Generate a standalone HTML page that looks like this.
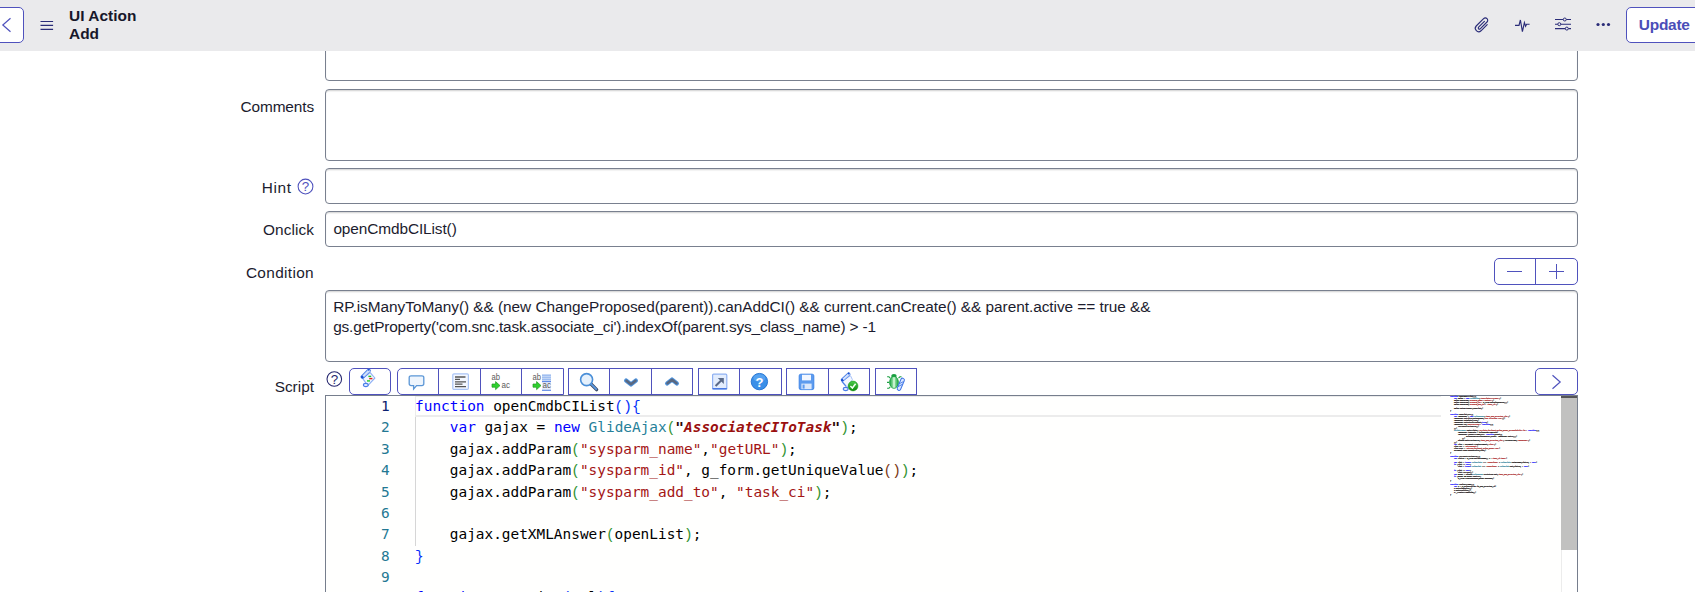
<!DOCTYPE html>
<html lang="en">
<head>
<meta charset="utf-8">
<title>UI Action - Add</title>
<style>
*{box-sizing:border-box;margin:0;padding:0}
html,body{width:1695px;height:592px;overflow:hidden;background:#fff}
body{font-family:"Liberation Sans",sans-serif;color:#1c1c2e;font-size:14.6px;position:relative}
.abs{position:absolute}
#hdr{position:absolute;left:0;top:0;width:1695px;height:51px;background:#eaeaec;z-index:5}
.hbtn{position:absolute;background:#fff;border:1px solid #4f52bd;border-radius:5px}
#back{left:-12px;top:7px;width:36px;height:36px}
#upd{left:1626px;top:7px;width:90px;height:36px;color:#4a4db8;font-weight:bold;font-size:15.45px;line-height:34px;padding-left:11.8px;letter-spacing:-0.25px}
#ttl{position:absolute;left:69px;top:6.8px;font-weight:bold;font-size:15.45px;line-height:18px;color:#17172a;letter-spacing:0.02px}
.lbl{position:absolute;left:120px;width:194px;text-align:right;font-size:15.4px;line-height:18px;color:#1c1c2e;letter-spacing:0.18px;white-space:nowrap}
.inp{position:absolute;left:325px;width:1253px;border:1px solid #79808f;border-radius:4px;background:#fff;box-shadow:inset 0 1px 1px rgba(0,0,0,.12),inset 0 2px 1px rgba(0,0,0,.04);font-size:15.4px;line-height:20px;padding:7px 7.4px;color:#1c1c2e;letter-spacing:-0.1px;white-space:nowrap;overflow:hidden}
.tb{position:absolute;top:368px;height:27px;border:1px solid #4f52bd;background:#fff}
.tb i{position:absolute;top:0;width:1px;height:25px;background:#4f52bd}
.tb svg{position:absolute;top:4px}
#ed{position:absolute;left:325px;top:395px;width:1253px;height:210px;border:1px solid #767e8d;background:#fffffe;font-family:"DejaVu Sans Mono","Liberation Mono",monospace;font-size:14.41px}
.ln{position:absolute;left:0;width:63.8px;text-align:right;color:#237893;height:21px;line-height:21px}
.cl{position:absolute;left:89.1px;height:21px;line-height:21px;white-space:pre;color:#000}
.cur{color:#0b216f}.k{color:#0000ff}.t{color:#267f99}.s{color:#a31515}.b1{color:#0431fa}.b2{color:#319331}.b3{color:#7b3814}.b1,.b2,.b3{font-family:"Liberation Mono",monospace;font-size:14.46px}
.si{color:#9a0f0f;font-weight:bold;font-style:italic}.sq{color:#2a0808;font-weight:bold;font-style:italic}
#mm{position:absolute;left:1124px;top:-1px;width:110px;height:104px;overflow:hidden}
#mm pre{font-family:"DejaVu Sans Mono","Liberation Mono",monospace;font-size:21px;letter-spacing:-2.64px;line-height:20px;transform:scale(0.1);transform-origin:0 0;white-space:pre;color:#000;font-weight:bold;-webkit-text-stroke:1.8px;opacity:.85}
</style>
</head>
<body>
<!-- form fields -->
<div class="inp" style="top:20px;height:61px"></div>
<div class="lbl" style="top:97.6px;letter-spacing:-.11px">Comments</div>
<div class="inp" style="top:89px;height:72px"></div>
<div class="lbl" style="top:178.6px;width:171.6px;letter-spacing:.6px">Hint</div>
<svg class="abs" style="left:296.7px;top:177.8px" width="17" height="17" viewBox="0 0 17 17"><circle cx="8.5" cy="8.5" r="7.4" fill="none" stroke="#4f52bd" stroke-width="1.05"/><text x="8.6" y="13.4" text-anchor="middle" font-family="Liberation Sans, sans-serif" font-size="13.4" fill="#4f52bd">?</text></svg>
<div class="inp" style="top:168px;height:36px"></div>
<div class="lbl" style="top:220.6px;letter-spacing:.07px">Onclick</div>
<div class="inp" style="top:211px;height:36px;padding-top:7px">openCmdbCIList()</div>
<div class="lbl" style="top:263.6px;letter-spacing:.34px">Condition</div>
<div class="hbtn" style="left:1494px;top:258px;width:84px;height:27px;border-radius:5px"></div>
<div class="abs" style="left:1535px;top:258px;width:1px;height:27px;background:#4f52bd"></div>
<div class="abs" style="left:1507px;top:271px;width:15px;height:1px;background:#4f52bd"></div>
<div class="abs" style="left:1549px;top:271px;width:15px;height:1px;background:#4f52bd"></div>
<div class="abs" style="left:1556px;top:264px;width:1px;height:15px;background:#4f52bd"></div>
<div class="inp" style="top:290px;height:72px;padding-top:6.2px;line-height:19.7px;padding-left:7.2px"><span style="letter-spacing:-.04px">RP.isManyToMany() &amp;&amp; (new ChangeProposed(parent)).canAddCI() &amp;&amp; current.canCreate() &amp;&amp; parent.active == true &amp;&amp;</span><br><span style="letter-spacing:-.163px">gs.getProperty('com.snc.task.associate_ci').indexOf(parent.sys_class_name) &gt; -1</span></div>
<div class="lbl" style="top:377.6px;letter-spacing:0px">Script</div>

<!--TBSTART-->
<!-- script toolbar -->
<svg class="abs" style="left:326px;top:370px" width="18" height="18" viewBox="0 0 18 18"><circle cx="8.3" cy="9" r="7.3" fill="none" stroke="#25266e" stroke-width="1.05"/><text x="8.4" y="13.7" text-anchor="middle" font-family="Liberation Sans, sans-serif" font-size="13.4" fill="#25266e">?</text></svg>
<div class="tb" style="left:349px;width:42px;border-radius:5px"></div>
<div class="tb" style="left:397px;width:167px;border-radius:5px 0 0 5px"><i style="left:40px"></i><i style="left:82px"></i><i style="left:123px"></i></div>
<div class="tb" style="left:568px;width:125px"><i style="left:40px"></i><i style="left:82px"></i></div>
<div class="tb" style="left:698px;width:84px"><i style="left:40px"></i></div>
<div class="tb" style="left:786px;width:84px"><i style="left:41px"></i></div>
<div class="tb" style="left:875px;width:42px"></div>
<div class="tb" style="left:1535px;width:43px;border-radius:5px"></div>
<svg class="abs" style="left:1550px;top:374px" width="12" height="16" viewBox="0 0 12 16"><path d="M2.5 1.2 L10.2 8 L2.5 14.8" fill="none" stroke="#4f52bd" stroke-width="1.2"/></svg>
<!-- toolbar icons -->
<svg class="abs" style="left:359px;top:368px" width="18" height="20" viewBox="0 0 18 20">
  <path d="M11.2 4.6 L15.9 10 L8.8 17.6 L3.6 10.4 Z" fill="#f3f7ff" stroke="#8fb0f5" stroke-width="1.1" stroke-linejoin="round"/>
  <path d="M9.8 2.6 L3.6 8.8" stroke="#4a7fe8" stroke-width="4" stroke-linecap="round"/>
  <path d="M10 2.6 L4.6 8" stroke="#cfe0fc" stroke-width="2.2" stroke-linecap="round"/>
  <circle cx="3.2" cy="9" r="1.3" fill="#1a4fd0"/><circle cx="9.8" cy="1.8" r="0.9" fill="#1a4fd0"/>
  <ellipse cx="6.8" cy="17" rx="2.4" ry="1.6" fill="#e6eeff" stroke="#4a7fe8" stroke-width="1.1"/>
  <rect x="9.4" y="7.7" width="2.8" height="1.4" fill="#22c022"/><rect x="10.2" y="9.9" width="3.2" height="1.4" fill="#e02a1a"/><rect x="8" y="12.1" width="3" height="1.6" fill="#3ed03e"/>
</svg>
<svg class="abs" style="left:408px;top:374px" width="18" height="17" viewBox="0 0 18 17">
  <path d="M3 1.8h11a1.8 1.8 0 0 1 1.8 1.8v6.2a1.8 1.8 0 0 1-1.8 1.8H8.6L5.6 15 5.6 11.6H3a1.8 1.8 0 0 1-1.8-1.8V3.6A1.8 1.8 0 0 1 3 1.8z" fill="#eef5fd" stroke="#5b96d6" stroke-width="1.3"/>
</svg>
<svg class="abs" style="left:452px;top:373px" width="18" height="18" viewBox="0 0 18 18">
  <rect x="0.8" y="0.8" width="15.6" height="15.6" rx="1.2" fill="#f3f7ff" stroke="#a9c4f5" stroke-width="1.2"/>
  <path d="M3 4h10.5M3 6.4h5M3 8.8h11M3 11.2h7.5M3 13.6h11" stroke="#555" stroke-width="1.3"/>
</svg>
<svg class="abs" style="left:490px;top:372px" width="22" height="20" viewBox="0 0 22 20">
  <text x="1.5" y="7.8" font-family="Liberation Sans, sans-serif" font-size="8.5" fill="#5a5a5a" textLength="8.5" lengthAdjust="spacingAndGlyphs">ab</text>
  <text x="11.5" y="16" font-family="Liberation Sans, sans-serif" font-size="8.5" fill="#5a5a5a" textLength="8.5" lengthAdjust="spacingAndGlyphs">ac</text>
  <path d="M2 12h3.6v-2.4l4.4 4-4.4 4v-2.4h-3.6z" fill="#2fd12f" stroke="#1c9c1c" stroke-width="0.7"/>
</svg>
<svg class="abs" style="left:531px;top:372px" width="22" height="20" viewBox="0 0 22 20">
  <rect x="11" y="2.4" width="9" height="6.2" fill="#9dbdf0"/><path d="M11 4.4h9M11 6.4h9" stroke="#d6e4fb" stroke-width="0.7"/>
  <text x="1.5" y="7.8" font-family="Liberation Sans, sans-serif" font-size="8.5" fill="#5a5a5a" textLength="8.5" lengthAdjust="spacingAndGlyphs">ab</text>
  <rect x="11" y="9.6" width="9" height="8.4" fill="#e4ecfb"/>
  <text x="11.5" y="16.4" font-family="Liberation Sans, sans-serif" font-size="8.5" fill="#5a5a5a" textLength="8.5" lengthAdjust="spacingAndGlyphs">ac</text>
  <path d="M11 9.6h9M11 18.3h9" stroke="#3b6fe0" stroke-width="0.9"/>
  <path d="M2 12h3.6v-2.4l4.4 4-4.4 4v-2.4h-3.6z" fill="#2fd12f" stroke="#1c9c1c" stroke-width="0.7"/>
</svg>
<svg class="abs" style="left:578px;top:371px" width="22" height="22" viewBox="0 0 22 22">
  <path d="M12.5 12.5 L18.6 18.6" stroke="#3d4a66" stroke-width="3.4" stroke-linecap="round"/>
  <path d="M12.7 12.7 L18.2 18.2" stroke="#5d9be0" stroke-width="1.8" stroke-linecap="round"/>
  <circle cx="8.6" cy="8.6" r="6" fill="#e6f1fc" stroke="#4a8fd8" stroke-width="1.6"/>
</svg>
<svg class="abs" style="left:623px;top:377px" width="16" height="12" viewBox="0 0 16 12"><path d="M3.2 3.6 L8 7.4 L12.8 3.6" fill="none" stroke="#4f93dc" stroke-width="4.4" stroke-linecap="round" stroke-linejoin="round"/><path d="M3.4 3.7 L8 7.2 L12.6 3.7" fill="none" stroke="#5a6880" stroke-width="2.4" stroke-linecap="round" stroke-linejoin="round"/></svg>
<svg class="abs" style="left:664px;top:375px" width="16" height="12" viewBox="0 0 16 12"><path d="M3.2 8.4 L8 4.6 L12.8 8.4" fill="none" stroke="#4f93dc" stroke-width="4.4" stroke-linecap="round" stroke-linejoin="round"/><path d="M3.4 8.3 L8 4.8 L12.6 8.3" fill="none" stroke="#5a6880" stroke-width="2.4" stroke-linecap="round" stroke-linejoin="round"/></svg>
<svg class="abs" style="left:711px;top:373px" width="18" height="18" viewBox="0 0 18 18">
  <rect x="1.6" y="1.2" width="14.2" height="15.2" rx="1" fill="#e3edfd" stroke="#8fb1f2" stroke-width="1.2"/>
  <path d="M1.6 15.6h14.2" stroke="#3b6fe0" stroke-width="1"/>
  <path d="M4.6 13 L11.4 6.2" stroke="#5a6a88" stroke-width="2"/><path d="M6.8 5 H12.8 V11 Z" fill="#5a6a88"/>
</svg>
<svg class="abs" style="left:750px;top:372px" width="19" height="19" viewBox="0 0 19 19">
  <circle cx="9.4" cy="9.6" r="8.2" fill="#3a8fe8" stroke="#1f6fd0" stroke-width="0.9"/>
  <ellipse cx="9.4" cy="6" rx="6" ry="3.8" fill="#6db3f5" opacity=".55"/>
  <text x="9.4" y="14.6" text-anchor="middle" font-family="Liberation Sans, sans-serif" font-weight="bold" font-size="13" fill="#fff">?</text>
</svg>
<svg class="abs" style="left:798px;top:373px" width="18" height="18" viewBox="0 0 18 18">
  <rect x="1.2" y="1.2" width="14.6" height="15.4" rx="1.6" fill="#5d9bee" stroke="#3f86e8" stroke-width="1"/>
  <rect x="4" y="1.8" width="9" height="5.6" fill="#f2f7ff"/>
  <rect x="3.4" y="10.6" width="10.2" height="5.6" fill="#dbe8fb"/><rect x="4.6" y="11.6" width="2" height="4" fill="#5d9bee"/>
</svg>
<svg class="abs" style="left:840px;top:372px" width="20" height="20" viewBox="0 0 20 20">
  <defs><linearGradient id="gck" x1="0" y1="0" x2="0" y2="1"><stop offset="0" stop-color="#4ccc4c"/><stop offset="1" stop-color="#0b8a0b"/></linearGradient></defs>
  <path d="M10.6 3.8 L12.4 7.6 L7 15.8 L5.4 12.8 L2 9 Z" fill="#f3f7ff" stroke="#9fbcf7" stroke-width="0.9" stroke-linejoin="round"/>
  <path d="M8.6 2.2 L2.6 7.8" stroke="#4a7fe8" stroke-width="3.6" stroke-linecap="round"/>
  <path d="M8.8 2.2 L3.6 7" stroke="#d6e4fd" stroke-width="1.9" stroke-linecap="round"/>
  <circle cx="2.2" cy="8.2" r="1.2" fill="#1a4fd0"/><circle cx="8.7" cy="1.5" r="0.9" fill="#1a4fd0"/>
  <path d="M2 9.6 L6 14.4" stroke="#4a7fe8" stroke-width="1.1"/>
  <ellipse cx="5.7" cy="17" rx="2.4" ry="1.6" fill="#e6eeff" stroke="#4a7fe8" stroke-width="1.1"/>
  <circle cx="13.05" cy="14" r="4.9" fill="url(#gck)" stroke="#0f8f0f" stroke-width="0.5"/>
  <path d="M10.4 14 L12.4 16 L15.6 11.8" fill="none" stroke="#f4fff4" stroke-width="1.5"/>
</svg>
<svg class="abs" style="left:886px;top:373px" width="20" height="19" viewBox="0 0 20 19">
  <defs><linearGradient id="gbg" x1="0" y1="0" x2="1" y2="0"><stop offset="0" stop-color="#14a03c"/><stop offset=".5" stop-color="#b4efbe"/><stop offset="1" stop-color="#14a03c"/></linearGradient></defs>
  <path d="M1.1 3.8h1.8l1.4 1.4M1 9.4h2M1.1 15.3h1.8l1.4-1.4M15.5 3.8h-1.6l-1.4 1.4" stroke="#1fa044" stroke-width="1.1" fill="none"/>
  <ellipse cx="8" cy="3" rx="2.7" ry="2.1" fill="#1aa040"/>
  <ellipse cx="8" cy="9.4" rx="4.4" ry="5.9" fill="url(#gbg)" stroke="#17a03e" stroke-width="0.9"/>
  <path d="M8 4.4v10.4" stroke="#f2fff4" stroke-width="0.9"/>
  <path d="M16.6 7 L13 15.6" stroke="#3f76e6" stroke-width="4.6" stroke-linecap="round"/>
  <path d="M16.6 7 L13 15.6" stroke="#dce7ff" stroke-width="2.6" stroke-linecap="round"/>
  <path d="M12.4 11.2 L17.4 8.6 M11.8 13.8 L16.6 11.2" stroke="#3f76e6" stroke-width="0.9"/>
</svg>
<!--TBEND-->

<!-- header -->
<div id="hdr">
  <div class="hbtn" id="back"></div>
  <svg class="abs" style="left:1px;top:17.3px" width="12" height="16" viewBox="0 0 12 16"><path d="M9.5 1.2 L1.8 8 L9.5 14.8" fill="none" stroke="#4f52bd" stroke-width="1.2"/></svg>
  <svg class="abs" style="left:40px;top:19px" width="14" height="12" viewBox="0 0 14 12"><path d="M0.5 2.5h12.6M0.5 6.4h12.6M0.5 10.3h12.6" stroke="#2a2c78" stroke-width="1.15" fill="none"/></svg>
  <div id="ttl">UI Action<br>Add</div>
  <svg class="abs" style="left:1472px;top:15px" width="20" height="20" viewBox="0 0 20 20"><path d="M15.2 9.6 L9 15.8 a3.4 3.4 0 0 1 -4.8 -4.8 L11.6 3.6 a2.4 2.4 0 0 1 3.4 3.4 L8.2 13.8 a1.1 1.1 0 0 1 -1.6 -1.6 L12.4 6.4" fill="none" stroke="#2a2c78" stroke-width="1.15" stroke-linecap="round"/></svg>
  <svg class="abs" style="left:1514px;top:17px" width="18" height="18" viewBox="0 0 18 18"><path d="M1 8.4 H5 L6.4 3 L8.4 14.6 L10.4 5.6 L11.6 9.2 L12.6 7.2 H15.6" fill="none" stroke="#2a2c78" stroke-width="1.15" stroke-linejoin="miter"/></svg>
  <svg class="abs" style="left:1554px;top:16px" width="18" height="18" viewBox="0 0 18 18"><path d="M1 3.5h8.2M12.3 3.5H17M1 8.2h2.8M6.9 8.2H17M1 12.6h10.3M14.4 12.6H17" stroke="#2a2c78" stroke-width="1.15" fill="none"/><circle cx="10.75" cy="3.5" r="1.5" fill="none" stroke="#2a2c78" stroke-width="1"/><circle cx="5.3" cy="8.2" r="1.5" fill="none" stroke="#2a2c78" stroke-width="1"/><circle cx="12.8" cy="12.6" r="1.5" fill="none" stroke="#2a2c78" stroke-width="1"/></svg>
  <svg class="abs" style="left:1595.1px;top:21px" width="16" height="7" viewBox="0 0 16 7"><circle cx="3" cy="3.5" r="1.6" fill="#2a2c78"/><circle cx="8.3" cy="3.5" r="1.6" fill="#2a2c78"/><circle cx="13.5" cy="3.5" r="1.6" fill="#2a2c78"/></svg>
  <div class="hbtn" id="upd">Update</div>
</div>

<!-- editor -->
<div id="ed">
<!--EDSTART-->
<div class="abs" style="left:89px;top:0;width:1026px;height:21px;border:solid #ececec;border-width:1px 0 2px 1px"></div>
<div class="abs" style="left:89px;top:21px;width:1px;height:129px;background:#d6d6d6"></div>
<div class="ln cur" style="top:-0.5px">1</div><div class="cl" style="top:-0.5px"><span class="k">function</span> openCmdbCIList<span class="b1">(){</span></div>
<div class="ln" style="top:20.5px">2</div><div class="cl" style="top:20.5px">    <span class="k">var</span> gajax = <span class="k">new</span> <span class="t">GlideAjax</span><span class="b2">(</span><span class="sq">"</span><span class="si">AssociateCIToTask</span><span class="sq">"</span><span class="b2">)</span>;</div>
<div class="ln" style="top:42.5px">3</div><div class="cl" style="top:42.5px">    gajax.addParam<span class="b2">(</span><span class="s">"sysparm_name"</span>,<span class="s">"getURL"</span><span class="b2">)</span>;</div>
<div class="ln" style="top:63.5px">4</div><div class="cl" style="top:63.5px">    gajax.addParam<span class="b2">(</span><span class="s">"sysparm_id"</span>, g_form.getUniqueValue<span class="b3">()</span><span class="b2">)</span>;</div>
<div class="ln" style="top:85.5px">5</div><div class="cl" style="top:85.5px">    gajax.addParam<span class="b2">(</span><span class="s">"sysparm_add_to"</span>, <span class="s">"task_ci"</span><span class="b2">)</span>;</div>
<div class="ln" style="top:106.5px">6</div><div class="cl" style="top:106.5px"></div>
<div class="ln" style="top:127.5px">7</div><div class="cl" style="top:127.5px">    gajax.getXMLAnswer<span class="b2">(</span>openList<span class="b2">)</span>;</div>
<div class="ln" style="top:149.5px">8</div><div class="cl" style="top:149.5px"><span class="b1">}</span></div>
<div class="ln" style="top:170.5px">9</div><div class="cl" style="top:170.5px"></div>
<div class="ln" style="top:190.5px">10</div><div class="cl" style="top:190.5px"><span class="k">function</span> openList<span class="b1">(</span>url<span class="b1">){</span></div>
<!--EDEND-->
<div id="mm">
<!--MMSTART-->
<pre><span class="k">function</span> openCmdbCIList(){
    <span class="k">var</span> gajax = <span class="k">new</span> <span class="t">GlideAjax</span>(<span class="s">"AssociateCIToTask"</span>);
    gajax.addParam(<span class="s">"sysparm_name"</span>,<span class="s">"getURL"</span>);
    gajax.addParam(<span class="s">"sysparm_id"</span>, g_form.getUniqueValue());
    gajax.addParam(<span class="s">"sysparm_add_to"</span>, <span class="s">"task_ci"</span>);

    gajax.getXMLAnswer(openList);
}

<span class="k">function</span> openList(url){
    <span class="k">var</span> cmdbModal = <span class="k">new</span> <span class="t">GlideModal</span>(<span class="s">"task_add_affected_cis"</span>);
    cmdbModal.setTitle(getMessage(<span class="s">"Add Affected CIs"</span>));
    cmdbModal.setWidth(1200);
    cmdbModal.setAutoFullHeight(<span class="k">true</span>);
    cmdbModal.on(<span class="s">"beforeclose"</span>, <span class="k">function</span>(){
        refreshAffectedCIs();
    });
    <span class="t">ScriptLoader</span>.getScripts(<span class="s">"/scripts/incident/glide_modal_accessibility.js"</span>, <span class="k">function</span>(){
        cmdbModal.template = glideModalTemplate;
        cmdbModal.renderIframe(url, <span class="k">function</span>(event){
                glideModalKeyDownHandler(event, cmdbModal.getID());
            });
        window.getAffectedCIs(<span class="s">"task_add_affected_cis"</span>).focusOnLoad(<span class="s">"cmdbModal"</span>);
    });
    <span class="k">var</span> link = document.createElement(<span class="s">"link"</span>);
    link.rel = <span class="s">"stylesheet"</span>;
    link.href = <span class="s">"styles/incident_glide_modal.css"</span>;
    document.head.appendChild(link);
}

<span class="k">function</span> refreshAffectedCIs(){
    <span class="k">var</span> listId = g_form.getTableName() + <span class="s">".task_ci.task"</span>;

    <span class="k">var</span> list = <span class="k">typeof</span> <span class="t">GlideList2</span> !== <span class="s">"undefined"</span> ? <span class="t">GlideList2</span>.getByName(listId) : <span class="k">null</span>;
    <span class="k">if</span> (list == <span class="k">null</span>)
        list = <span class="k">typeof</span> <span class="t">GlideList</span> !== <span class="s">"undefined"</span> ? <span class="t">GlideList</span>.get(listId) : <span class="k">null</span>;

    <span class="k">if</span> (list != <span class="k">null</span>)
        list.refresh();
    <span class="k">var</span> modal = window.<span class="t">GlideModal</span>.prototype.get(<span class="s">"task_add_affected_cis"</span>);
    <span class="k">if</span> (modal &amp;&amp; modal.destroy)
        g_form.clearMessages(modal.message);
}

<span class="k">function</span> resizeIframe(){
    <span class="k">var</span> x = g_glideOverlay.is_add_affected_ci;
    x.autoDimension();
    x.autoPosition();
    x._createIframeShim();
}</pre>
<!--MMEND-->
</div>
<div class="abs" style="left:1235px;top:0;width:16px;height:300px;background:#fff;border-left:1px solid #ececec"></div>
<div class="abs" style="left:1235px;top:0;width:16px;height:154px;background:#c1c1c0"></div>
<div class="abs" style="left:1235px;top:0;width:16px;height:2px;background:#555"></div>
</div>
</body>
</html>
